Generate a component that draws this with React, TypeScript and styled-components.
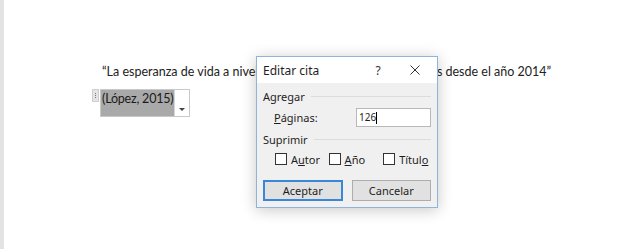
import { createGlobalStyle } from "styled-components";
import styled from "styled-components";

const GlobalStyle = createGlobalStyle`
  html, body {
    margin: 0;
    padding: 0;
    background: #ffffff;
  }
  body {
    width: 640px;
    height: 249px;
    overflow: hidden;
  }
`;

const Screen = styled.div`
  position: relative;
  display: flex;
  width: 640px;
  height: 249px;
  background: #ffffff;
`;

const Gutter = styled.div`
  width: 4px;
  background: #e3e3e3;
  flex-shrink: 0;
`;

const Paper = styled.div`
  flex: 1;
  padding: 63px 0 0 98px;
  font-family: Lato, "Open Sans", sans-serif;
  font-size: 12.5px;
  color: #222;
`;

const Quote = styled.p`
  margin: 0;
  line-height: 18px;
  white-space: nowrap;
`;

const CiteControl = styled.div`
  display: flex;
  margin: 8px 0 0 -10px;
  align-items: flex-start;
`;

const Grip = styled.div`
  width: 7px;
  height: 13px;
  margin-right: 1px;
  background: #e4e4e4;
  border: 1px solid #cfcfcf;
  box-sizing: border-box;
  display: flex;
  flex-direction: column;
  align-items: center;
  justify-content: space-around;
  padding: 2px 0;
  span {
    width: 1px;
    height: 1px;
    background: #777;
  }
`;

const CiteBox = styled.div`
  display: flex;
  border: 1px solid #c9c9c9;
  height: 28px;
  box-sizing: border-box;
`;

const CiteText = styled.div`
  background: #a9a9a9;
  color: #1a1a1a;
  padding: 0 1px;
  white-space: nowrap;
  line-height: 17px;
  letter-spacing: -0.2px;
  border-right: 1px solid #d6d6d6;
`;

const DropArrow = styled.div`
  width: 14px;
  display: flex;
  align-items: flex-end;
  justify-content: center;
  padding-bottom: 5px;
  box-sizing: border-box;
  &::after {
    content: "";
    border-left: 3px solid transparent;
    border-right: 3px solid transparent;
    border-top: 3px solid #444;
  }
`;

const Dialog = styled.div`
  position: absolute;
  left: 256px;
  top: 56px;
  width: 182px;
  height: 152px;
  box-sizing: border-box;
  border: 1px solid #8fb3d9;
  background: #f0f0f0;
  box-shadow: 0 2px 14px rgba(0, 0, 0, 0.22);
  font-family: "Noto Sans", sans-serif;
  font-size: 11px;
  color: #1e1e1e;
  display: flex;
  flex-direction: column;
`;

const TitleBar = styled.div`
  height: 26px;
  background: #ffffff;
  display: flex;
  align-items: center;
  padding: 0 0 0 6px;
`;

const Title = styled.div`
  flex: 1;
  font-size: 12px;
`;

const TitleButton = styled.div<{ $w: number }>`
  width: ${(p) => p.$w}px;
  height: 26px;
  display: flex;
  align-items: center;
  justify-content: center;
  font-size: 12px;
  color: #333;
`;

const Body = styled.div`
  padding: 6px 6px 0 6px;
  display: flex;
  flex-direction: column;
`;

const GroupLabel = styled.div`
  display: flex;
  align-items: center;
  gap: 6px;
  height: 14px;
  &::after {
    content: "";
    flex: 1;
    height: 1px;
    background: #dcdcdc;
  }
`;

const FieldRow = styled.div`
  display: flex;
  align-items: center;
  padding-left: 11px;
  margin-top: 5px;
  height: 19px;
`;

const FieldLabel = styled.div`
  flex: 1;
`;

const TextInput = styled.div`
  width: 75px;
  height: 19px;
  box-sizing: border-box;
  border: 1px solid #b8b8b8;
  background: #fff;
  font-size: 10px;
  line-height: 17px;
  padding-left: 2px;
  display: flex;
  align-items: center;
  &::after {
    content: "";
    width: 1px;
    height: 12px;
    background: #000;
  }
`;

const CheckRow = styled.div`
  display: flex;
  padding-left: 12px;
  margin-top: 6px;
  height: 14px;
`;

const Check = styled.div<{ $w: number }>`
  width: ${(p) => p.$w}px;
  display: flex;
  align-items: center;
  gap: 4px;
`;

const Box = styled.span`
  width: 12px;
  height: 12px;
  box-sizing: border-box;
  border: 1px solid #333;
  background: #fff;
`;

const ButtonRow = styled.div`
  display: flex;
  gap: 9px;
  margin-top: 14px;
`;

const Button = styled.div<{ $primary?: boolean }>`
  width: 80px;
  height: 21px;
  box-sizing: border-box;
  background: #e1e1e1;
  border: ${(p) => (p.$primary ? "2px solid #3a86d8" : "1px solid #adadad")};
  display: flex;
  align-items: center;
  justify-content: center;
`;

const Gap = styled.div<{ $h: number }>`
  height: ${(p) => p.$h}px;
`;

export default function App() {
  return (
    <>
      <GlobalStyle />
      <Screen>
        <Gutter />
        <Paper>
          <Quote>
            “La esperanza de vida a nivel mundial ha aumentado en 5 años desde el año 2014”
          </Quote>
          <CiteControl>
            <Grip>
              <span />
              <span />
              <span />
            </Grip>
            <CiteBox>
              <CiteText>(López, 2015)</CiteText>
              <DropArrow />
            </CiteBox>
          </CiteControl>
        </Paper>

        <Dialog>
          <TitleBar>
            <Title>Editar cita</Title>
            <TitleButton $w={30}>?</TitleButton>
            <TitleButton $w={44}>
              <svg width="10" height="10" viewBox="0 0 10 10">
                <path d="M0.5 0.5 L9.5 9.5 M9.5 0.5 L0.5 9.5" stroke="#333" strokeWidth="1" />
              </svg>
            </TitleButton>
          </TitleBar>
          <Body>
            <GroupLabel>Agregar</GroupLabel>
            <FieldRow>
              <FieldLabel>
                <u>P</u>áginas:
              </FieldLabel>
              <TextInput>126</TextInput>
            </FieldRow>
            <Gap $h={5} />
            <GroupLabel>Suprimir</GroupLabel>
            <CheckRow>
              <Check $w={56}>
                <Box />
                <span>
                  A<u>u</u>tor
                </span>
              </Check>
              <Check $w={57}>
                <Box />
                <span>
                  <u>A</u>ño
                </span>
              </Check>
              <Check $w={50}>
                <Box />
                <span>
                  Títul<u>o</u>
                </span>
              </Check>
            </CheckRow>
            <ButtonRow>
              <Button $primary>Aceptar</Button>
              <Button>Cancelar</Button>
            </ButtonRow>
          </Body>
        </Dialog>
      </Screen>
    </>
  );
}
